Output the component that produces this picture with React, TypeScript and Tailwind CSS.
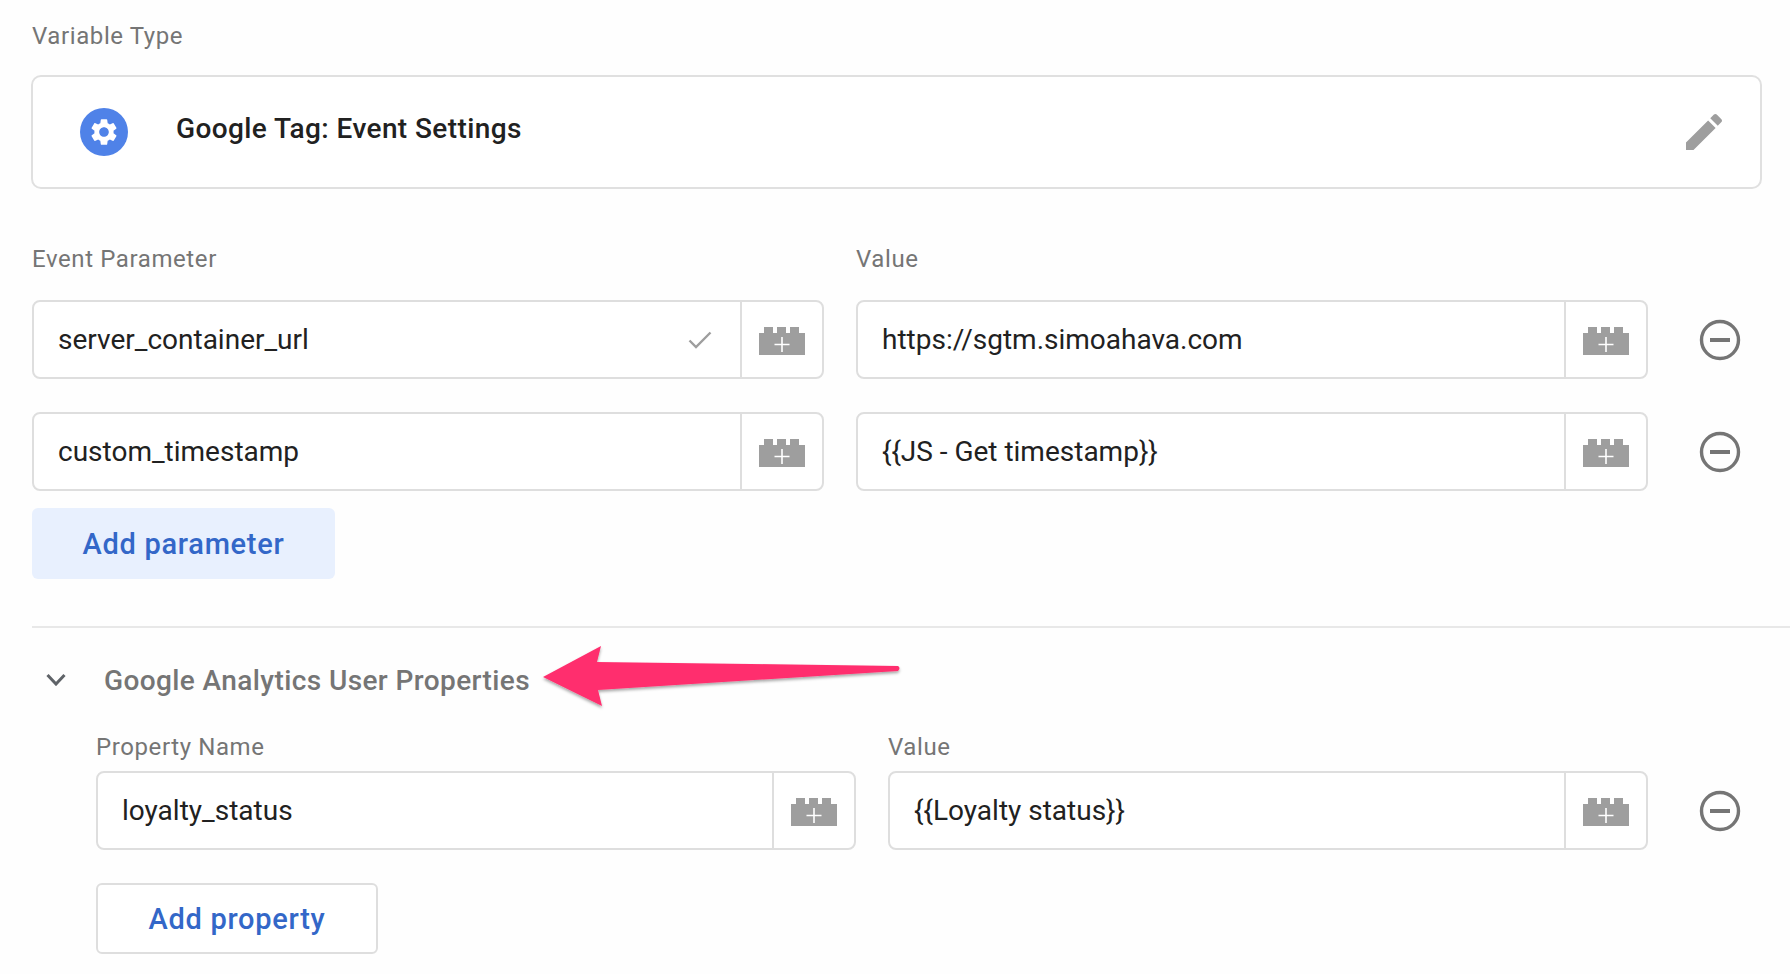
import React from 'react';

const BrickPlus = () => (
  <svg width="46" height="28" viewBox="0 0 46 28" className="block">
    <path d="M0 6h5V0h9v6h4V0h9v6h4V0h9v6h6v22H0z" fill="#9e9e9e" />
    <path d="M23 10v15M15.5 17.5h15" stroke="#fff" strokeWidth="1.6" />
  </svg>
);

const MinusCircle = () => (
  <svg width="42" height="42" viewBox="0 0 42 42" className="block">
    <circle cx="21" cy="21" r="18.5" fill="none" stroke="#757575" strokeWidth="3.4" />
    <path d="M11 21h20" stroke="#757575" strokeWidth="4" />
  </svg>
);

const Field: React.FC<{ value: string; className: string; check?: boolean }> = ({ value, className, check }) => (
  <div className={`flex h-[79px] items-stretch rounded-[8px] border-2 border-[#dedede] bg-white ${className}`}>
    <div className="flex min-w-0 flex-1 items-center justify-between pl-[24px] pr-[28px] text-[28px] text-[#212121]">
      <span>{value}</span>
      {check && (
        <svg width="24" height="18" viewBox="0 0 24 18" className="block">
          <path d="M1.5 9.5l6.5 6.5L22.5 1.5" fill="none" stroke="#9e9e9e" strokeWidth="2.4" />
        </svg>
      )}
    </div>
    <div className="flex w-[82px] shrink-0 items-center justify-center border-l-2 border-[#dedede] pt-[2px]">
      <BrickPlus />
    </div>
  </div>
);

const Label: React.FC<{ className?: string; children: React.ReactNode }> = ({ className = '', children }) => (
  <div className={`h-[24px] text-[24px] leading-[24px] tracking-[0.6px] text-[#757575] ${className}`}>{children}</div>
);

export default function App() {
  return (
    <div className="relative h-[974px] w-[1790px] overflow-hidden bg-[#fefefe] pl-[32px] pt-[24px] font-['Roboto',sans-serif]">
      <Label>Variable Type</Label>

      <div className="-ml-px mt-[27px] flex h-[114px] w-[1731px] items-center rounded-[10px] border-2 border-[#e0e0e0] bg-white pl-[47px] pr-[32px]">
        <div className="flex h-[48px] w-[48px] items-center justify-center rounded-full bg-[#4f82e8]">
          <svg width="32" height="32" viewBox="0 0 24 24" className="block">
            <path
              fill="#fff"
              d="M19.14 12.94c.04-.3.06-.61.06-.94 0-.32-.02-.64-.07-.94l2.03-1.58a.49.49 0 0 0 .12-.61l-1.92-3.32a.488.488 0 0 0-.59-.22l-2.39.96c-.5-.38-1.03-.7-1.62-.94l-.36-2.54a.484.484 0 0 0-.48-.41h-3.84c-.24 0-.43.17-.47.41l-.36 2.54c-.59.24-1.13.57-1.62.94l-2.39-.96c-.22-.08-.47 0-.59.22L2.74 8.87c-.12.21-.08.47.12.61l2.03 1.58c-.05.3-.09.63-.09.94s.02.64.07.94l-2.03 1.58a.49.49 0 0 0-.12.61l1.92 3.32c.12.22.37.29.59.22l2.39-.96c.5.38 1.03.7 1.62.94l.36 2.54c.05.24.24.41.48.41h3.84c.24 0 .44-.17.47-.41l.36-2.54c.59-.24 1.13-.56 1.62-.94l2.39.96c.22.08.47 0 .59-.22l1.92-3.32c.12-.22.07-.47-.12-.61l-2.01-1.58zM12 15.6c-1.98 0-3.6-1.62-3.6-3.6s1.62-3.6 3.6-3.6 3.6 1.62 3.6 3.6-1.62 3.6-3.6 3.6z"
            />
          </svg>
        </div>
        <div className="ml-[48px] pb-[6px] text-[28px] font-medium tracking-[0.4px] text-[#212121]">Google Tag: Event Settings</div>
        <svg width="48" height="48" viewBox="0 0 24 24" className="ml-auto block">
          <path
            fill="#9e9e9e"
            d="M3 17.25V21h3.75L17.81 9.94l-3.75-3.75L3 17.25zM20.71 7.04c.39-.39.39-1.02 0-1.41l-2.34-2.34c-.39-.39-1.02-.39-1.41 0l-1.83 1.83 3.75 3.75 1.83-1.83z"
          />
        </svg>
      </div>

      <div className="mt-[58px] flex">
        <Label className="w-[824px]">Event Parameter</Label>
        <Label>Value</Label>
      </div>

      <div className="mt-[29px] flex items-center">
        <Field value="server_container_url" className="w-[792px]" check />
        <Field value="https://sgtm.simoahava.com" className="ml-[32px] w-[792px]" />
        <div className="ml-[51px]">
          <MinusCircle />
        </div>
      </div>

      <div className="mt-[33px] flex items-center">
        <Field value="custom_timestamp" className="w-[792px]" />
        <Field value="{{JS - Get timestamp}}" className="ml-[32px] w-[792px]" />
        <div className="ml-[51px]">
          <MinusCircle />
        </div>
      </div>

      <button className="mt-[17px] flex h-[71px] w-[303px] items-center justify-center rounded-[6px] bg-[#e8f0fe] pt-[2px] text-[29px] font-medium tracking-[0.7px] text-[#3367c8]">
        Add parameter
      </button>

      <div className="mt-[47px] h-[2px] bg-[#e8e8e8]" />

      <div className="mt-[37px] flex h-[32px] items-center">
        <svg width="20" height="13" viewBox="0 0 20 13" className="mb-[4px] ml-[14px] block">
          <path d="M1.5 2l8.5 9 8.5-9" fill="none" stroke="#5f6368" strokeWidth="3" />
        </svg>
        <div className="ml-[38px] text-[28px] font-medium tracking-[0.4px] text-[#757575]">Google Analytics User Properties</div>
      </div>

      <div className="ml-[64px] mt-[38px] flex">
        <Label className="w-[792px]">Property Name</Label>
        <Label>Value</Label>
      </div>

      <div className="ml-[64px] mt-[12px] flex items-center">
        <Field value="loyalty_status" className="w-[760px]" />
        <Field value="{{Loyalty status}}" className="ml-[32px] w-[760px]" />
        <div className="ml-[51px]">
          <MinusCircle />
        </div>
      </div>

      <button className="ml-[64px] mt-[33px] flex h-[71px] w-[282px] items-center justify-center rounded-[6px] border-2 border-[#dedede] bg-white pt-[2px] text-[29px] font-medium tracking-[0.7px] text-[#3367c8]">
        Add property
      </button>

      {/* annotation arrow drawn over the screenshot */}
      <svg width="400" height="100" viewBox="0 0 400 100" className="absolute left-[520px] top-[630px]">
        <defs>
          <filter id="arrow-shadow" x="-5%" y="-20%" width="110%" height="150%">
            <feDropShadow dx="0" dy="2" stdDeviation="1.5" floodColor="#000" floodOpacity="0.35" />
          </filter>
        </defs>
        <path
          d="M23 47 L81 16 L77 32 L378 36 Q381 38 378 41 L78 60 L82 76 Z"
          fill="#ff2f6e"
          filter="url(#arrow-shadow)"
        />
      </svg>
    </div>
  );
}
